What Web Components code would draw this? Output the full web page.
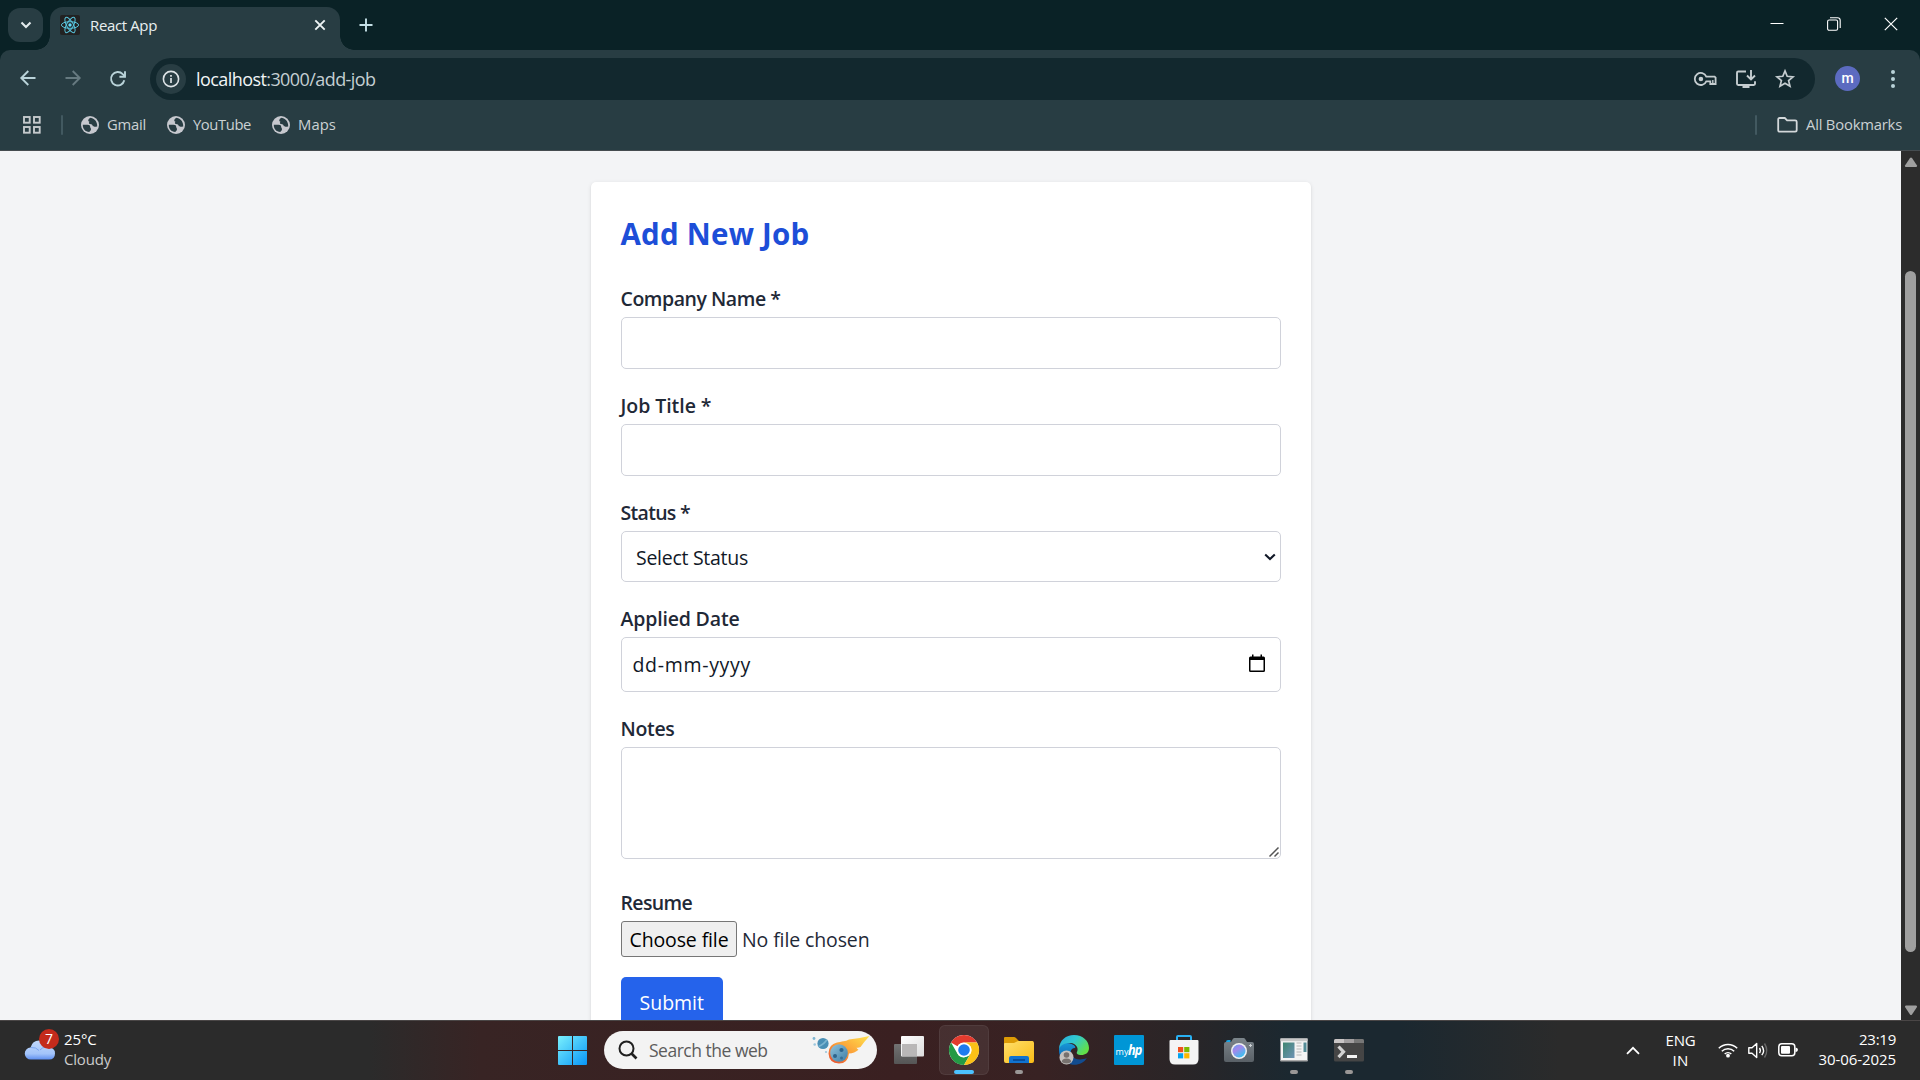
<!DOCTYPE html>
<html lang="en">
<head>
<meta charset="utf-8">
<title>React App</title>
<style>
html,body{margin:0;height:100%;overflow:hidden;background:#f3f4f6;font-family:"Open Sans","Noto Sans",sans-serif}
</style>
</head>
<body>
<desktop-screen></desktop-screen>
<script>
const define=(name,html,init)=>customElements.define(name,class extends HTMLElement{
  connectedCallback(){
    if(this.shadowRoot)return;
    const t=document.createElement('template');
    t.innerHTML=typeof html==='function'?html(this):html;
    this.attachShadow({mode:'open'}).append(document.importNode(t.content,true));
    if(init)init(this);
  }
});

/* Text tracked to fill a given advance width */
define('fit-text','<style>:host{display:block;white-space:nowrap;flex:none}span{display:inline-block}</style><span><slot></slot></span>',el=>{
  const w=+el.getAttribute('w'),s=el.shadowRoot.querySelector('span');
  el.style.width=w+'px';
  const n=el.textContent.length;
  s.style.letterSpacing=((w-s.getBoundingClientRect().width)/n).toFixed(3)+'px';
});

const ICONS={
react:[20,20,'<rect width="20" height="20" rx="2" fill="#222"/><g fill="none" stroke="#58c4dc" stroke-width="1"><ellipse cx="10" cy="10" rx="8.6" ry="3.3"/><ellipse cx="10" cy="10" rx="8.6" ry="3.3" transform="rotate(60 10 10)"/><ellipse cx="10" cy="10" rx="8.6" ry="3.3" transform="rotate(120 10 10)"/></g><circle cx="10" cy="10" r="1.7" fill="#61dafb"/>'],
chevdown:[12,8,'<path d="M1.5 1.5 6 6l4.500-4.500" fill="none" stroke="#e3ebed" stroke-width="2.100"/>'],
close:[12,12,'<path d="M1.300 1.300l9.400 9.400M10.700 1.300l-9.400 9.400" stroke="#eef4f5" stroke-width="1.900"/>'],
plus:[14,14,'<path d="M7 .5v13M.5 7h13" stroke="#c4e0e6" stroke-width="1.900"/>'],
back:[16,16,'<path d="M15.500 8H1.500M8.300 1 1.300 8l7 7" fill="none" stroke="#b9d3d9" stroke-width="1.900"/>'],
fwd:[16,16,'<path d="M.5 8h14M7.700 1l7 7-7 7" fill="none" stroke="#667a80" stroke-width="1.900"/>'],
reload:[18,18,'<path d="M15.300 10.300A6.700 6.700 0 1 1 13.700 4.200L16 6.500" fill="none" stroke="#b9d3d9" stroke-width="1.900"/><path d="M16 1.200v5.600h-5.600" fill="none" stroke="#b9d3d9" stroke-width="1.900"/>'],
info:[18,18,'<circle cx="9" cy="9" r="7.600" fill="none" stroke="#dde3e6" stroke-width="1.600"/><path d="M9 8v5M9 5v1.800" stroke="#dde3e6" stroke-width="1.700"/>'],
key:[24,14,'<path d="M12.300 4.600A6 6 0 1 0 12.300 9.300H16.300V12h5.300V5.600L20.600 4.600Z" fill="none" stroke="#c5cdd0" stroke-width="1.800"/><path d="M18.800 8v4" stroke="#c5cdd0" stroke-width="1.400"/><circle cx="6.900" cy="7" r="2.300" fill="#c5cdd0"/>'],
install:[22,19,'<path d="M11 1.500H3.200Q2 1.500 2 2.700v11.100Q2 15 3.200 15h15.600q1.200 0 1.200-1.200v-2.600" fill="none" stroke="#c5cdd0" stroke-width="1.900"/><path d="M7.500 15h7v3h-7z" fill="#c5cdd0"/><path d="M16 0v9M12 5.500l4 4 4-4" fill="none" stroke="#c5cdd0" stroke-width="1.900"/>'],
star:[20,20,'<path d="M10 1.900l2.200 5.400 5.800.5-4.400 3.800 1.400 5.700-5-3.100-5 3.100 1.400-5.700L2 7.800l5.800-.5z" fill="none" stroke="#c5cdd0" stroke-width="1.700"/>'],
dots:[6,20,'<g fill="#b9d3d9"><circle cx="3" cy="3" r="2"/><circle cx="3" cy="10" r="2"/><circle cx="3" cy="17" r="2"/></g>'],
min:[14,14,'<path d="M.5 6.500h13" stroke="#fff" stroke-width="1"/>'],
max:[14,14,'<rect x=".6" y="3" width="10" height="10.300" rx="1.500" fill="none" stroke="#fff" stroke-width="1.100"/><path d="M3 .8h7.500q2.700 0 2.700 2.700v7.500" fill="none" stroke="#fff" stroke-width="1.100"/>'],
wclose:[14,14,'<path d="M.8.8l12.400 12.400M13.200.8.8 13.200" stroke="#fff" stroke-width="1.200"/>'],
grid:[20,20,'<g fill="none" stroke="#c5cacc" stroke-width="1.900"><rect x="2" y="2" width="5.700" height="5.700"/><rect x="12" y="2" width="5.700" height="5.700"/><rect x="2" y="12" width="5.700" height="5.700"/><rect x="12" y="12" width="5.700" height="5.700"/></g>'],
globe:[18,18,'<circle cx="9" cy="9" r="9" fill="#c6c8ce"/><path d="M9.500 1.700C7 3 6.500 5 8.500 5.700c-1 .8-.8 2 .5 2.300 1.800.4 2.200.5 2.700 1.800.4 1 1.800 1 4.500.6.300-3.600-1.700-7.700-6.700-8.700zM1.800 8.800h4.700c2 0 2.700.8 2.700 2.200 0 1 .8 1 .8 2.300 0 1.200-1 1.700-1.700 2.800C4.300 15.800 1.600 12.700 1.800 8.800z" fill="#283d43"/>'],
folder:[21,16,'<path d="M1.200 2.500Q1.200 1 2.700 1H7.800l2.300 2.300h8Q19.700 3.300 19.700 4.800v8.300Q19.700 14.700 18.100 14.700H2.800Q1.200 14.700 1.200 13.200z" fill="none" stroke="#d3d8da" stroke-width="1.800"/>'],
sup:[12,11,'<path d="M5 1q1-1 2 0l5 7.500q.3 1.500-1 1.500H1Q-.3 10 0 8.500z" fill="#9f9f9f"/>'],
sdown:[12,11,'<path d="M5 9.500q1 1 2 0L12 2Q12.300.5 11 .5H1Q-.3.5 0 2z" fill="#9f9f9f"/>'],
cloud:[30,20,'<defs><linearGradient id="c" x2="0" y2="1"><stop offset="0" stop-color="#c1d8fb"/><stop offset=".7" stop-color="#a3c4fa"/><stop offset="1" stop-color="#5f8ff0"/></linearGradient></defs><path d="M6 19.500a6 6 0 0 1-.5-12Q7.500.5 14 .5q5.500 0 8 6.500 8 0 8 6.500 0 6-6 6z" fill="url(#c)"/><path d="M6 7.500q5-.5 8 3M22 7q-5 0-7 3" fill="none" stroke="#7ba5f0" stroke-width="1"/>'],
win:[29,29,'<defs><linearGradient id="w" gradientUnits="userSpaceOnUse" x1="0" y1="0" x2="29" y2="29"><stop offset="0" stop-color="#7af0fd"/><stop offset="1" stop-color="#0895f6"/></linearGradient></defs><path d="M1 0h13v14H0V1Q0 0 1 0zM15 0h13q1 0 1 1v13H15zM0 15h14v14H1q-1 0-1-1zM15 15h14v13q0 1-1 1H15z" fill="url(#w)"/>'],
search:[20,20,'<circle cx="8.500" cy="8.500" r="7" fill="none" stroke="#202020" stroke-width="2"/><path d="M13.500 13.500l5 5" stroke="#202020" stroke-width="2.600"/>'],
comet:[60,30,'<defs><linearGradient id="f" x1="0" y1="1" x2="1" y2="0"><stop offset="0" stop-color="#e5482f"/><stop offset=".42" stop-color="#fb9a37"/><stop offset="1" stop-color="#ffe34d"/></linearGradient><linearGradient id="p" x2="1" y2="1"><stop offset="0" stop-color="#8fc3dc"/><stop offset="1" stop-color="#3f7ea6"/></linearGradient></defs><path d="M17.500 18.500Q17.500 9.500 26 7.500q3-.3 6-1.200 3 .2 6-1.800Q48 3.500 58.500 1 53 7 49.500 12q-2 1-4 .7 1 1.300 2 2-4 3.500-9.500 3.800Q37 28.500 28 28.500q-10-.5-10.500-10z" fill="url(#f)"/><circle cx="28" cy="18" r="8.800" fill="url(#p)"/><circle cx="30.500" cy="15" r="2.100" fill="#2e648c"/><circle cx="24" cy="21" r="2" fill="#2e648c"/><circle cx="30.500" cy="23" r="1.500" fill="#366f96"/><circle cx="12" cy="8.500" r="5.600" fill="#4a8fb5"/><path d="M7.500 11.500Q13 9.500 16 4.500" fill="none" stroke="#7bb4d0" stroke-width="1.600"/><circle cx="3" cy="3.500" r="1.400" fill="#7db5d2"/><circle cx="3.700" cy="9.500" r="1.300" fill="#9bc6dd"/><circle cx="15" cy="17" r="1.100" fill="#9bc6dd"/>'],
task:[30,28,'<defs><linearGradient id="t" x2="1" y2="1"><stop offset="0" stop-color="#fff"/><stop offset="1" stop-color="#dcdcdc"/></linearGradient><linearGradient id="u" x2="0" y2="1"><stop offset="0" stop-color="#727272"/><stop offset="1" stop-color="#555"/></linearGradient></defs><rect y="8" width="23" height="20" rx="1" fill="url(#u)"/><rect x="7" width="23" height="20.500" rx="1" fill="url(#t)"/><path d="M8 8h15v12H8z" fill="#b9b7b7"/>'],
chrome:[30,30,'<circle cx="15" cy="15" r="15" fill="#fff"/><path d="M2 7.500A15 15 0 0 1 28 7.500H15A7.500 7.500 0 0 0 8.500 11.250z" fill="#e33b2e"/><path d="M2 7.500 8.500 18.750A7.500 7.500 0 0 0 15 22.500L21.500 18.750 15 30A15 15 0 0 1 2 7.500z" fill="#249a45"/><path d="M28 7.500A15 15 0 0 1 15 30L21.500 18.750A7.500 7.500 0 0 0 21.500 11.250L15 7.500z" fill="#fbc116"/><circle cx="15" cy="15" r="7.300" fill="#fff"/><circle cx="15" cy="15" r="5.800" fill="#1f7bee"/>'],
files:[30,28,'<defs><linearGradient id="y" x2="1" y2="1"><stop offset="0" stop-color="#ffdf6b"/><stop offset="1" stop-color="#fabc16"/></linearGradient></defs><path d="M0 9V2Q0 1 1 1H10q1 0 2 1l3 3h14v5z" fill="#dd9b05"/><path d="M0 8Q0 7 1 7h9l4-2h14q2 0 2 2v18q0 2-2 2H2q-2 0-2-2z" fill="url(#y)"/><path d="M5 27v-5q0-2 2-2H23q2 0 2 2v5z" fill="#1173d0"/><path d="M9 24H21" stroke="#073f87" stroke-width="1.400"/>'],
edge:[30,30,'<defs><linearGradient id="e" x2="1" y2=".6"><stop offset="0" stop-color="#27a9df"/><stop offset=".5" stop-color="#31c9cf"/><stop offset="1" stop-color="#62df48"/></linearGradient><linearGradient id="d" x2="0" y2="1"><stop offset="0" stop-color="#1798d8"/><stop offset="1" stop-color="#0d56a6"/></linearGradient></defs><path d="M12 14c-2 8 6 13 15.800 9C23 32 8 32 2.500 23 .5 20-.3 17 0 14z" fill="#124c8f"/><path d="M0 14c1-6 8-7 12.500-5C16 10.500 17 12 16 13c-5 0-6 6-2 11l-4 5C4 27 0 22 0 14z" fill="url(#d)"/><path d="M0 14C.5 5 7 0 15 0c9 0 15 6 15 13 0 5-4 7-7.500 7-4 0-5.500-1.500-4.500-3C20 13 17 8.500 11.500 8 6 7.500 1.500 10 0 14z" fill="url(#e)"/><circle cx="7.500" cy="22.500" r="7" fill="#c5c2bf"/><circle cx="7.500" cy="20" r="2.800" fill="#77716e"/><path d="M2.800 27q0-3.500 4.700-3.500t4.700 3.500q-4.700 3-9.400 0z" fill="#77716e"/>'],
store:[30,30,'<path d="M8 7V2Q8 1 9 1H21q1 0 1 1V7" fill="none" stroke="#29b1f3" stroke-width="2"/><path d="M.5 6Q.5 5 1.500 5h27q1 0 1 1V24q0 5.500-5.500 5.500H6Q.5 29.500.5 24z" fill="#f4f4f4"/><path d="M9 12h5.200v5.200H9z" fill="#f0511f"/><path d="M15.200 12h5.200v5.200h-5.200z" fill="#7db900"/><path d="M9 18.200h5.200v5.200H9z" fill="#04a3ee"/><path d="M15.200 18.200h5.200v5.200h-5.200z" fill="#fdb700"/>'],
camera:[30,24,'<defs><linearGradient id="l" x2=".7" y2="1"><stop offset="0" stop-color="#5aa4f4"/><stop offset=".4" stop-color="#a587ec"/><stop offset="1" stop-color="#37c3ee"/></linearGradient><linearGradient id="k" x2="0" y2="1"><stop offset="0" stop-color="#7c858b"/><stop offset="1" stop-color="#596066"/></linearGradient></defs><path d="M2 4Q2 2 4 2h2.500v3H2z" fill="#16a3e4"/><path d="M0 6q0-2 2-2H7l2-3.200Q9.500 0 10.500 0h9q1 0 1.500.8L23 4h5q2 0 2 2v16q0 2-2 2H2q-2 0-2-2z" fill="url(#k)"/><circle cx="15" cy="13" r="8" fill="#f0f0f2"/><circle cx="15" cy="13" r="6.500" fill="url(#l)"/><path d="M26.500 6v3M25 7.500h3" stroke="#ccd2d5"/>'],
appwin:[28,24,'<defs><linearGradient id="a" x2="1" y2="1"><stop offset="0" stop-color="#3e8570"/><stop offset="1" stop-color="#6f93b6"/></linearGradient></defs><path d="M.5.5h27v22.500H.5z" fill="#f4f4f4"/><path d="M.5.5h27v2.700H.5z" fill="#c8c8c8"/><path d="M3 4.500h11.500V20H3z" fill="url(#a)"/><path d="M16.500 5h5M16.500 8h5M16.500 11h5M16.500 14h5M16.500 17h5" stroke="#ccc" stroke-width="1.500"/><path d="M23.500 4.500h3V14h-3z" fill="#548c97"/><path d="M.5 22h27v1.500H.5z" fill="#aaa"/>'],
term:[30,23,'<rect width="30" height="22.500" rx="1.500" fill="#454545"/><path d="M0 4V1.500Q0 0 1.500 0H10v4z" fill="#c9c5c5"/><path d="M10 0h10v4H10z" fill="#a29fa0"/><path d="M20 0h8.500Q30 0 30 1.500V4H20z" fill="#777"/><path d="M4.500 7.500l5 5.300-5 5.300" fill="none" stroke="#d2d2d2" stroke-width="3.200"/><path d="M13 17.500h10" stroke="#f4f4f4" stroke-width="3"/>'],
up:[14,9,'<path d="M1 7.800l6-6 6 6" fill="none" stroke="#fff" stroke-width="1.800"/>'],
wifi:[20,16,'<g fill="none" stroke="#fff" stroke-width="1.500"><path d="M.8 6.300a13 13 0 0 1 18.400 0"/><path d="M3.800 9.200a8.800 8.800 0 0 1 12.400 0"/><path d="M6.700 12a4.700 4.700 0 0 1 6.600 0"/></g><circle cx="10" cy="13.700" r="1.900" fill="#fff"/>'],
vol:[21,17,'<g fill="none" stroke="#fff" stroke-width="1.400" stroke-linejoin="round"><path d="M.8 5.700H4L8.700 1.500v14L4 11.300H.8z"/><path d="M11.500 6q1.700 2.500 0 5M13.800 3.800q3.500 4.700 0 9.400"/></g><path d="M16.500 1.500q4.500 7 0 14" fill="none" stroke="#696969" stroke-width="1.400"/>'],
bat:[20,14,'<rect x=".8" y=".8" width="16" height="12" rx="3" fill="none" stroke="#fff" stroke-width="1.500"/><rect x="3" y="3" width="9" height="7.700" rx="1" fill="#fff"/><path d="M17.500 4.500Q20 5 20 6.800T17.500 9.300z" fill="#fff"/>'],
cal:[16,18,'<path d="M1.500 2.500h13q1.500 0 1.500 1.500v12.500q0 1.500-1.500 1.500h-13Q0 18 0 16.500V4Q0 2.500 1.500 2.500zM1.500 6v10.500h13V6z" fill="#000" fill-rule="evenodd"/><path d="M3 .5h1.500v3H3zM11.500.5H13v3h-1.500z" fill="#000"/>'],
caret:[12,8,'<path d="M1.200 1.500 6 6l4.800-4.500" fill="none" stroke="#111827" stroke-width="2.100"/>'],
grip:[10,10,'<path d="M.5 9.500l9-9M5.500 9.500l4-4" stroke="#555" stroke-width="1.500"/>']
};
define('ui-icon',el=>{const[w,h,b]=ICONS[el.getAttribute('name')];
  return `<style>:host{display:block;flex:none;width:${w}px;height:${h}px}svg{display:block;overflow:visible}</style><svg width="${w}" height="${h}" viewBox="0 0 ${w} ${h}">${b}</svg>`});

define('tab-strip',`<style>
:host{display:flex;height:50px;background:#0a2226;align-items:flex-start}
.menu{width:35px;height:34px;margin:8px 0 0 8px;border-radius:12px;background:#283d43;display:flex;align-items:center;justify-content:center}
.tab{position:relative;box-sizing:border-box;width:290px;height:43px;margin:7px 0 0 7px;border-radius:13px 13px 0 0;background:#283d43;display:flex;align-items:center;padding:0 14px 7px 10px}
.tab:before,.tab:after{content:"";position:absolute;bottom:0;width:14px;height:14px}
.tab:before{left:-14px;background:radial-gradient(circle at 0 0,transparent 13.500px,#283d43 14px)}
.tab:after{right:-14px;background:radial-gradient(circle at 100% 0,transparent 13.500px,#283d43 14px)}
fit-text{font-size:15px;line-height:20px;color:#e8eff0;margin-left:10px}
.new{margin:18px 0 0 18.500px}.ctl{margin-left:auto;display:flex;gap:43px;padding:17px 22px 0 0}
</style><div class="menu"><ui-icon name="chevdown"></ui-icon></div>
<div class="tab"><ui-icon name="react"></ui-icon><fit-text w="67">React App</fit-text><ui-icon name="close" style="margin-left:auto"></ui-icon></div>
<ui-icon class="new" name="plus"></ui-icon>
<div class="ctl"><ui-icon name="min"></ui-icon><ui-icon name="max"></ui-icon><ui-icon name="wclose"></ui-icon></div>`);

define('nav-bar',`<style>
:host{display:flex;height:58px;align-items:center;background:#283d43;border-radius:10px 10px 0 0}
.b{display:flex;gap:28.500px;margin-left:20px}
.omni{display:flex;align-items:center;width:1665px;height:42px;box-sizing:border-box;border-radius:21px;background:#12282e;margin-left:23px;padding:0 20px 0 6px}
.i{width:30px;height:30px;border-radius:50%;background:#283d43;display:flex;align-items:center;justify-content:center}
fit-text{font-size:18px;line-height:30px;color:#c4cfd2;margin:0 0 0 10px}b{font-weight:400;color:#f1f5f6}
.r{margin-left:auto;display:flex;align-items:center;gap:18px}
.av{width:25px;height:25px;border-radius:50%;background:#5c6bc0;color:#fff;font:500 14px/24px Roboto,sans-serif;text-align:center;margin:-1px 0 0 20px}
</style><div class="b"><ui-icon name="back"></ui-icon><ui-icon name="fwd"></ui-icon><ui-icon name="reload"></ui-icon></div>
<div class="omni"><div class="i"><ui-icon name="info"></ui-icon></div><fit-text w="179.500"><b>localhost</b>:3000/add-job</fit-text>
<div class="r"><ui-icon name="key"></ui-icon><ui-icon name="install" style="margin-left:-1px"></ui-icon><ui-icon name="star"></ui-icon></div></div>
<div class="av">m</div><ui-icon name="dots" style="margin-left:29.500px"></ui-icon>`);

define('book-mark',el=>`<style>:host{display:flex;align-items:center;gap:8px;font-size:14.800px;line-height:22px;color:#cbd1d3}fit-text{margin-top:-1px}</style><ui-icon name="${el.getAttribute('icon')}"></ui-icon><fit-text w="${el.getAttribute('w')}">${el.getAttribute('label')}</fit-text>`);
define('bookmarks-bar',`<style>:host{display:flex;box-sizing:border-box;height:43px;align-items:center;background:#283d43;border-bottom:1px solid #454c50;padding:0 18px 9px 22px}
i{width:2px;height:20px;border-radius:1px;background:#425960}.l{display:flex;gap:21px;margin-left:18px}</style>
<ui-icon name="grid"></ui-icon><i style="margin-left:19px"></i>
<div class="l"><book-mark icon="globe" w="39" label="Gmail"></book-mark><book-mark icon="globe" w="58" label="YouTube"></book-mark><book-mark icon="globe" w="38" label="Maps"></book-mark></div>
<i style="margin-left:auto"></i><book-mark style="margin-left:20px" icon="folder" w="96" label="All Bookmarks"></book-mark>`);

define('form-field',el=>`<style>:host{display:block}
label{display:block;height:30px;font-size:19.500px;font-weight:600;line-height:23px;color:#1f2937}</style>
<label><fit-text w="${el.getAttribute('w')}">${el.getAttribute('label')}</fit-text></label><slot></slot>`);
define('form-box',`<style>:host{display:flex;box-sizing:border-box;border:1px solid #d0d2da;border-radius:5px;background:#fff;align-items:center;justify-content:space-between;font-size:19.500px;line-height:28px;color:#111827}</style><slot></slot>`);
define('job-form',`<style>
:host{display:block;box-sizing:border-box;width:720px;height:900px;padding:30px;background:#fff;border-radius:5px;box-shadow:0 1px 4px rgba(0,0,0,.1),0 1px 2px rgba(0,0,0,.06)}
h2{margin:0 0 32px;font-size:29.500px;line-height:43px;font-weight:700;color:#1d4ed8}
.f{display:flex;flex-direction:column;gap:25px}
.file{display:flex;align-items:center;height:36px;font-size:19.500px;line-height:28px;color:#1f2937}
.cf{box-sizing:border-box;width:116px;height:36px;border:1px solid #767676;border-radius:3px;background:#efefef;color:#000;padding:4px 0 0 8px}
.s{width:102px;height:50px;box-sizing:border-box;border-radius:5px;background:#2563eb;color:#fff;font-size:19.500px;line-height:28px;padding:12px 0 0 19px;margin-top:20px}
</style><h2><fit-text w="189">Add New Job</fit-text></h2>
<div class="f">
<form-field label="Company Name *" w="160"><form-box style="height:52px"></form-box></form-field>
<form-field label="Job Title *" w="91"><form-box style="height:52px"></form-box></form-field>
<form-field label="Status *" w="69.500"><form-box style="height:51px;padding:3px 4px 0 14.500px"><fit-text w="112">Select Status</fit-text><ui-icon name="caret" style="margin-top:-2px"></ui-icon></form-box></form-field>
<form-field label="Applied Date" w="119"><form-box style="height:55px;padding:1px 15px 0 11px"><fit-text w="118.500">dd-mm-yyyy</fit-text><ui-icon name="cal" style="margin-top:-4px"></ui-icon></form-box></form-field>
<form-field label="Notes" w="54"><form-box style="height:112px;align-items:flex-end;justify-content:flex-end;padding:1px"><ui-icon name="grip"></ui-icon></form-box></form-field>
<form-field label="Resume" w="71.500" style="margin-top:7px"><div class="file"><div class="cf"><fit-text w="99">Choose file</fit-text></div><fit-text w="127.500" style="margin:1px 0 0 5.500px">No file chosen</fit-text></div></form-field>
</div><div class="s"><fit-text w="64.500">Submit</fit-text></div>`);

define('scroll-bar',`<style>:host{display:flex;flex-direction:column;align-items:center;width:19px;background:#2c2c2c;box-sizing:border-box;padding:6px 0 4px}
.t{width:11px;height:681px;border-radius:6px;background:#9f9f9f;margin:103px 0 auto}</style>
<ui-icon name="sup"></ui-icon><div class="t"></div><ui-icon name="sdown"></ui-icon>`);

define('task-app',el=>`<style>:host{display:flex;position:relative;width:50px;height:50px;box-sizing:border-box;align-items:center;justify-content:center;border-radius:6px}
:host([active]){background:rgba(255,255,255,.07);box-shadow:inset 0 0 0 1px rgba(255,255,255,.06)}
:host([open]):after{content:"";position:absolute;bottom:1px;width:8px;height:4px;border-radius:2px;background:#9a9796}
:host([active]):after{width:20px;background:#4cc2ff}
.hp{width:30px;height:30px;border-radius:1px;background:#0096d6;color:#fff;display:flex;align-items:baseline;justify-content:center;font-size:9px;line-height:29px;box-sizing:border-box}
.hp b{font:italic 700 15px/28px "Open Sans",sans-serif;letter-spacing:-1px;transform:scaleX(.85);transform-origin:0 0;margin-right:-2px}</style>${el.getAttribute('icon')==='hp'?'<div class="hp"><span>my</span><b>hp</b></div>':`<ui-icon name="${el.getAttribute('icon')}"></ui-icon>`}`);

define('task-bar',`<style>
:host{display:flex;box-sizing:border-box;height:60px;align-items:center;border-top:1px solid #4a4646;padding-bottom:1px;color:#fff;font-size:15px;line-height:20px;
background:linear-gradient(90deg,#2b2b2b 0,#2b2b2b 370px,#382424 480px,#3a2021 900px,#382223 1040px,#2a2527 1180px,#1b2830 1290px,#1b2830 1400px,#2b2b2b 1560px)}
.w{position:relative;display:flex;gap:9px;margin-left:25px;width:533px;align-items:center}
.txt{margin-top:-3px}
.badge{position:absolute;left:14px;top:-3px;width:20px;height:20px;border-radius:50%;background:#c42b1c;text-align:center;font-size:14px;line-height:20px}
.q{display:flex;align-items:center;box-sizing:border-box;width:273px;height:38px;border-radius:19px;background:#f3f3f3;color:#5c5c5c;margin:0 7px 0 17px;padding:0 6px 0 14px;font-size:17.500px;line-height:26px}
.apps{display:flex;gap:5px}.tray{margin-left:auto;display:flex;align-items:center;padding-right:24px}
.c{display:flex;flex-direction:column;align-items:center}.e{align-items:flex-end}
</style>
<div class="w"><ui-icon name="cloud"></ui-icon><div class="badge">7</div><div class="txt"><fit-text w="32.500">25°C</fit-text><fit-text w="47" style="color:#ccc">Cloudy</fit-text></div></div>
<ui-icon name="win"></ui-icon>
<div class="q"><ui-icon name="search"></ui-icon><fit-text w="118.500" style="margin:0 0 0 11px">Search the web</fit-text><ui-icon name="comet" style="margin-left:auto"></ui-icon></div>
<div class="apps"><task-app icon="task"></task-app><task-app icon="chrome" active open></task-app><task-app icon="files" open></task-app><task-app icon="edge"></task-app><task-app icon="hp"></task-app><task-app icon="store"></task-app><task-app icon="camera"></task-app><task-app icon="appwin" open></task-app><task-app icon="term" open></task-app></div>
<div class="tray"><ui-icon name="up"></ui-icon><div class="c" style="margin:-1px 22px 0 26px"><fit-text w="30">ENG</fit-text><fit-text w="16">IN</fit-text></div>
<ui-icon name="wifi"></ui-icon><ui-icon name="vol" style="margin:0 9px 0 10px"></ui-icon><ui-icon name="bat"></ui-icon>
<div class="c e" style="margin:-3px 0 0 21px"><fit-text w="37">23:19</fit-text><fit-text w="77.500">30-06-2025</fit-text></div></div>`);

define('desktop-screen',`<style>:host{display:flex;flex-direction:column;width:1920px;height:1080px;overflow:hidden;background:#0a2226}
main{display:flex;height:869px;background:#f3f4f6;overflow:hidden}
.page{flex:1;display:flex;justify-content:center;align-items:flex-start;padding-top:31px}</style>
<tab-strip></tab-strip><nav-bar></nav-bar><bookmarks-bar></bookmarks-bar>
<main><div class="page"><job-form></job-form></div><scroll-bar></scroll-bar></main>
<task-bar></task-bar>`);
</script>
</body>
</html>
